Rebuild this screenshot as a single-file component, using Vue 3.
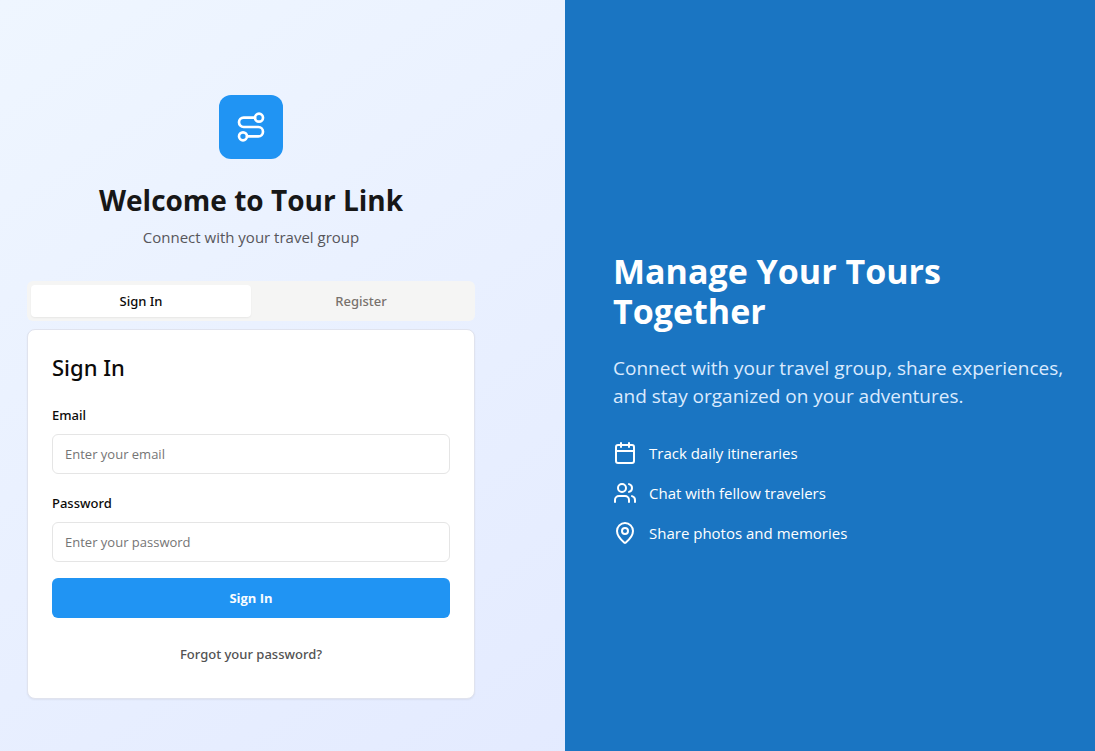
<script setup>
import { ref } from 'vue'

const tabs = ['Sign In', 'Register']
const active = ref('Sign In')
const email = ref('')
const password = ref('')
</script>

<template>
  <div class="page">
    <main class="auth">
      <div class="auth-inner">
        <header class="intro">
          <span class="logo">
            <svg class="icon" width="32" height="32" viewBox="0 0 24 24" aria-hidden="true">
              <circle cx="6" cy="19" r="3" />
              <path d="M9 19h8.500a3.500 3.500 0 0 0 0-7h-11a3.500 3.500 0 0 1 0-7H15" />
              <circle cx="18" cy="5" r="3" />
            </svg>
          </span>
          <h1>Welcome to Tour Link</h1>
          <p>Connect with your travel group</p>
        </header>

        <div class="tabs" role="tablist">
          <button
            v-for="tab in tabs"
            :key="tab"
            type="button"
            role="tab"
            class="tab"
            :class="{ active: tab === active }"
            :aria-selected="tab === active"
            @click="active = tab"
          >{{ tab }}</button>
        </div>

        <section class="card">
          <h2>{{ active }}</h2>
          <form @submit.prevent>
            <div class="field">
              <label for="email">Email</label>
              <input id="email" v-model="email" type="email" placeholder="Enter your email" />
            </div>
            <div class="field">
              <label for="password">Password</label>
              <input id="password" v-model="password" type="password" placeholder="Enter your password" />
            </div>
            <button class="submit" type="submit">{{ active }}</button>
            <button class="forgot" type="button">Forgot your password?</button>
          </form>
        </section>
      </div>
    </main>

    <aside class="promo">
      <h2>Manage Your Tours Together</h2>
      <p>Connect with your travel group, share experiences, and stay organized on your adventures.</p>
      <ul>
        <li>
          <svg class="icon" width="24" height="24" viewBox="0 0 24 24" aria-hidden="true">
            <path d="M8 2v4M16 2v4M3 10h18" />
            <rect x="3" y="4" width="18" height="18" rx="2" />
          </svg>
          Track daily itineraries
        </li>
        <li>
          <svg class="icon" width="24" height="24" viewBox="0 0 24 24" aria-hidden="true">
            <path d="M16 21v-2a4 4 0 0 0-4-4H6a4 4 0 0 0-4 4v2" />
            <circle cx="9" cy="7" r="4" />
            <path d="M22 21v-2a4 4 0 0 0-3-3.870M16 3.130a4 4 0 0 1 0 7.750" />
          </svg>
          Chat with fellow travelers
        </li>
        <li>
          <svg class="icon" width="24" height="24" viewBox="0 0 24 24" aria-hidden="true">
            <path d="M20 10c0 4.993-5.539 10.193-7.399 11.799a1 1 0 0 1-1.202 0C9.539 20.193 4 14.993 4 10a8 8 0 0 1 16 0" />
            <circle cx="12" cy="10" r="3" />
          </svg>
          Share photos and memories
        </li>
      </ul>
    </aside>
  </div>
</template>

<style>
body {
  margin: 0;
}
</style>

<style scoped>
.page {
  display: grid;
  grid-template-columns: 565fr 530fr;
  min-height: 100vh;
  background: linear-gradient(to bottom right, #eff6ff, #e0e7ff);
  font-family: "Segoe UI", "Open Sans", "Noto Sans", sans-serif;
  color: #0c0a09;
}

.page *,
.page {
  box-sizing: border-box;
}

h1,
h2,
p,
ul {
  margin: 0;
  padding: 0;
}

button,
input {
  font: inherit;
}

button {
  border: 0;
  cursor: pointer;
}

.icon {
  flex: none;
  fill: none;
  stroke: currentColor;
  stroke-width: 2;
  stroke-linecap: round;
  stroke-linejoin: round;
}

.auth {
  display: flex;
  align-items: center;
  padding: 42px 90px 0 27px;
}

.auth-inner {
  width: 100%;
  max-width: 448px;
}

.intro {
  display: flex;
  flex-direction: column;
  align-items: center;
  margin-bottom: 32px;
  text-align: center;
}

.logo {
  display: grid;
  place-items: center;
  width: 64px;
  height: 64px;
  margin-bottom: 24px;
  border-radius: 12px;
  background: #2094f3;
  color: #fff;
}

h1 {
  font-size: 28px;
  font-weight: 700;
  line-height: 34px;
  color: #171717;
}

.intro p {
  margin-top: 8px;
  font-size: 15px;
  line-height: 24px;
  color: #57565b;
}

.tab,
.forgot,
.field label,
.card h2 {
  font-family: "Segoe UI", "Noto Sans", sans-serif;
  font-weight: 500;
}

.tabs {
  display: grid;
  grid-template-columns: 1fr 1fr;
  height: 40px;
  margin-bottom: 8px;
  padding: 4px;
  border-radius: 6px;
  background: #f5f5f4;
}

.tab {
  border-radius: 4px;
  background: transparent;
  font-size: 13px;
  color: #78716c;
}

.tab.active {
  background: #fff;
  color: #0c0a09;
  box-shadow: 0 1px 2px rgba(0, 0, 0, 0.06);
}

.card {
  padding: 24px;
  border: 1px solid #e0e3ee;
  border-radius: 8px;
  background: #fff;
  box-shadow: 0 1px 2px rgba(0, 0, 0, 0.06);
}

.card h2 {
  margin-bottom: 22px;
  font-size: 22px;
  line-height: 26px;
}

form {
  display: flex;
  flex-direction: column;
  gap: 16px;
}

.field {
  display: flex;
  flex-direction: column;
  gap: 6px;
}

.field label {
  font-size: 13px;
  line-height: 26px;
}

.field input {
  width: 100%;
  height: 40px;
  padding: 0 12px;
  border: 1px solid #e5e5e5;
  border-radius: 6px;
  background: #fff;
  font-size: 13px;
  color: inherit;
}

.field input::placeholder {
  color: #757575;
  opacity: 1;
}

.submit,
.forgot {
  height: 40px;
  border-radius: 6px;
  font-size: 13px;
}

.submit {
  background: #2094f3;
  font-weight: 700;
  color: #f8fcff;
}

.forgot {
  background: transparent;
  color: #525252;
}

.promo {
  display: flex;
  flex-direction: column;
  justify-content: center;
  padding: 44px 24px 0 48px;
  background: #1a75c2;
  color: #fff;
}

.promo h2 {
  font-size: 34px;
  font-weight: 700;
  line-height: 40px;
}

.promo p {
  margin: 23px 0 31px;
  font-size: 19px;
  line-height: 28px;
  color: #dbeafe;
}

.promo ul {
  display: grid;
  gap: 16px;
  list-style: none;
}

.promo li {
  display: flex;
  align-items: center;
  gap: 12px;
  font-size: 15px;
  line-height: 24px;
}
</style>
